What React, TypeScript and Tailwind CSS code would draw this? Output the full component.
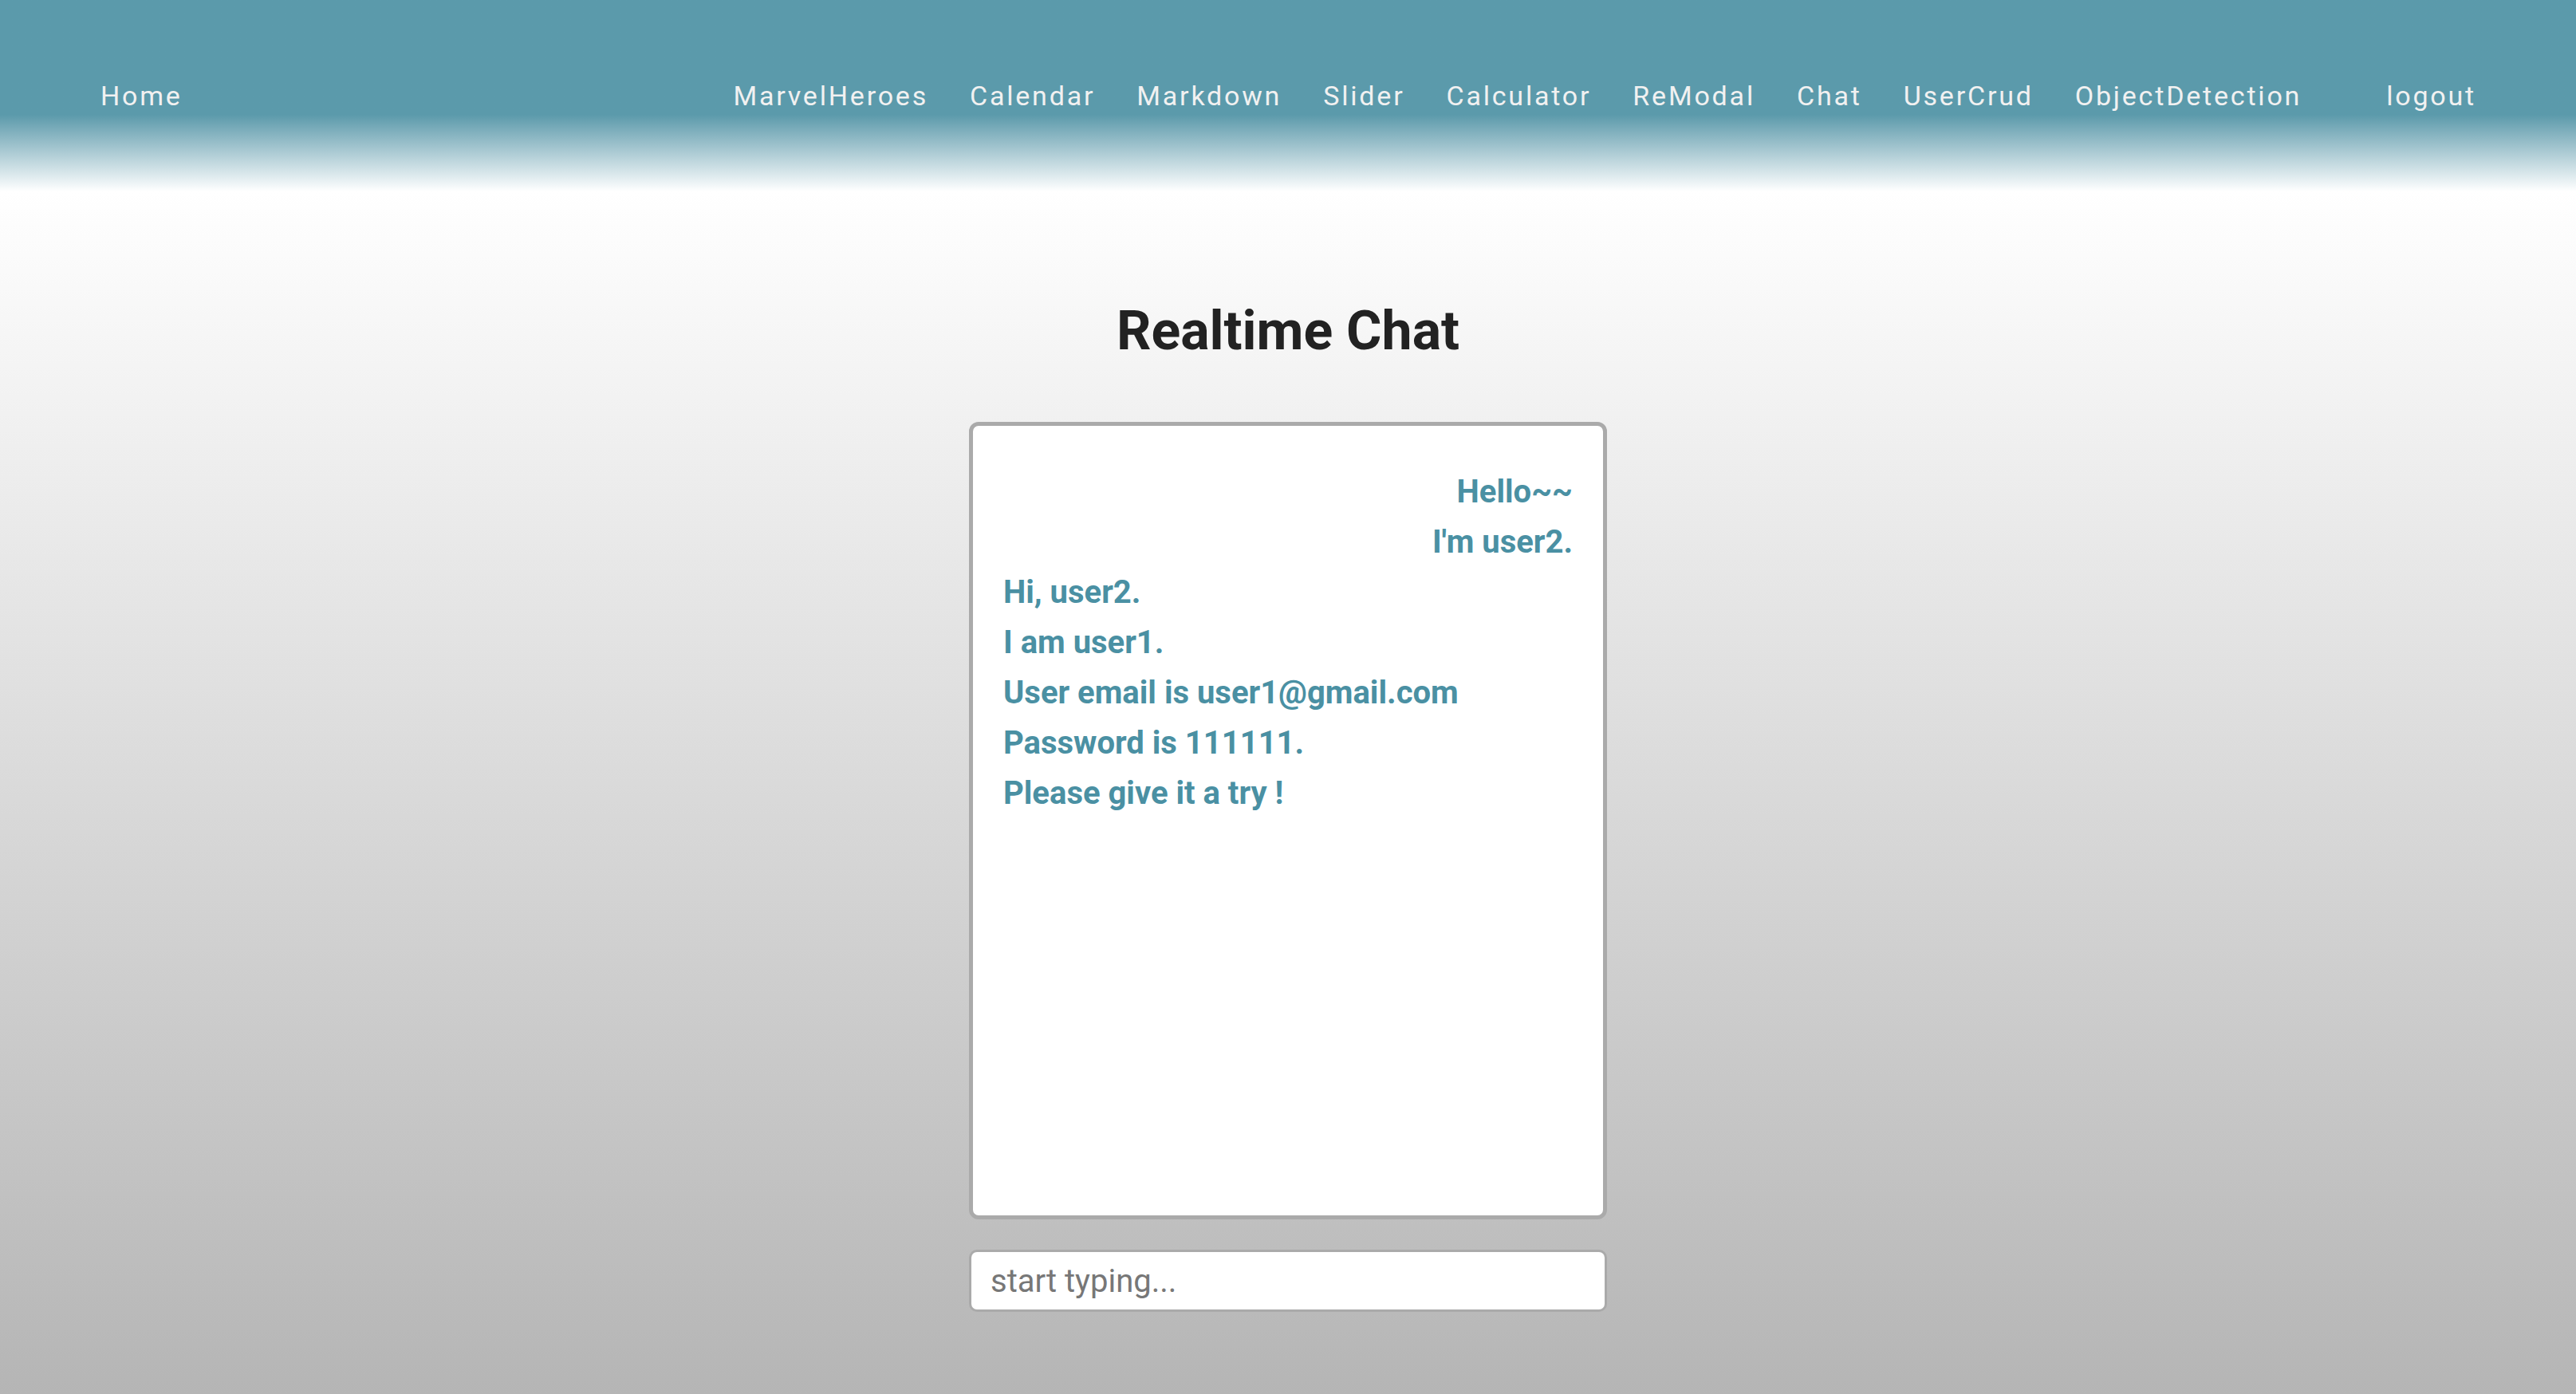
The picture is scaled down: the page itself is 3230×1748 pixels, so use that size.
import React, { useState } from 'react';

const links = ['MarvelHeroes', 'Calendar', 'Markdown', 'Slider', 'Calculator', 'ReModal', 'Chat', 'UserCrud', 'ObjectDetection'];

const messages = [
  { text: 'Hello~~', mine: true },
  { text: "I'm user2.", mine: true },
  { text: 'Hi, user2.', mine: false },
  { text: 'I am user1.', mine: false },
  { text: 'User email is user1@gmail.com', mine: false },
  { text: 'Password is 111111.', mine: false },
  { text: 'Please give it a try !', mine: false },
];

const Navbar = () => (
  <nav className="h-[240px] flex items-start justify-between pl-[126px] pr-[125px] pt-[100px] bg-linear-to-b from-[#5b9aab] from-60% to-white">
    <a href="#home" className="text-[34px] leading-[40px] tracking-[2.8px] text-[#f1f1f1]">Home</a>
    <div className="flex items-center">
      <div className="flex items-center gap-[52px]">
        {links.map((l) => (
          <a key={l} href={'#' + l.toLowerCase()} className="text-[34px] leading-[40px] tracking-[2.8px] text-[#f1f1f1]">
            {l}
          </a>
        ))}
      </div>
      <a href="#logout" className="ml-[106px] text-[34px] leading-[40px] tracking-[2.8px] text-[#f1f1f1]">logout</a>
    </div>
  </nav>
);

const App = () => {
  const [value, setValue] = useState('');

  return (
    <div className="min-h-[1748px] font-['Roboto',sans-serif] bg-white">
      <Navbar />
      <main className="min-h-[1508px] flex flex-col items-center bg-linear-to-b from-white to-[#b5b5b5]">
        <h1 className="mt-[135px] text-[68px] leading-[80px] font-bold text-[#222222]">Realtime Chat</h1>

        <div className="mt-[74px] w-[800px] h-[1000px] bg-white border-[5px] border-[#aaaaaa] rounded-[12px] pt-[51px] px-[38px]">
          {messages.map((m, i) => (
            <div
              key={i}
              className={'text-[40px] leading-[63px] font-bold text-[#4a90a3] ' + (m.mine ? 'text-right' : 'text-left')}
            >
              {m.text}
            </div>
          ))}
        </div>

        <input
          value={value}
          onChange={(e) => setValue(e.target.value)}
          placeholder="start typing..."
          className="mt-[38px] w-[800px] h-[78px] bg-white border-[3px] border-[#aaaaaa] rounded-[10px] px-[24px] text-[40px] text-[#333] placeholder:text-[#777777] outline-none"
        />
      </main>
    </div>
  );
};

export default App;
